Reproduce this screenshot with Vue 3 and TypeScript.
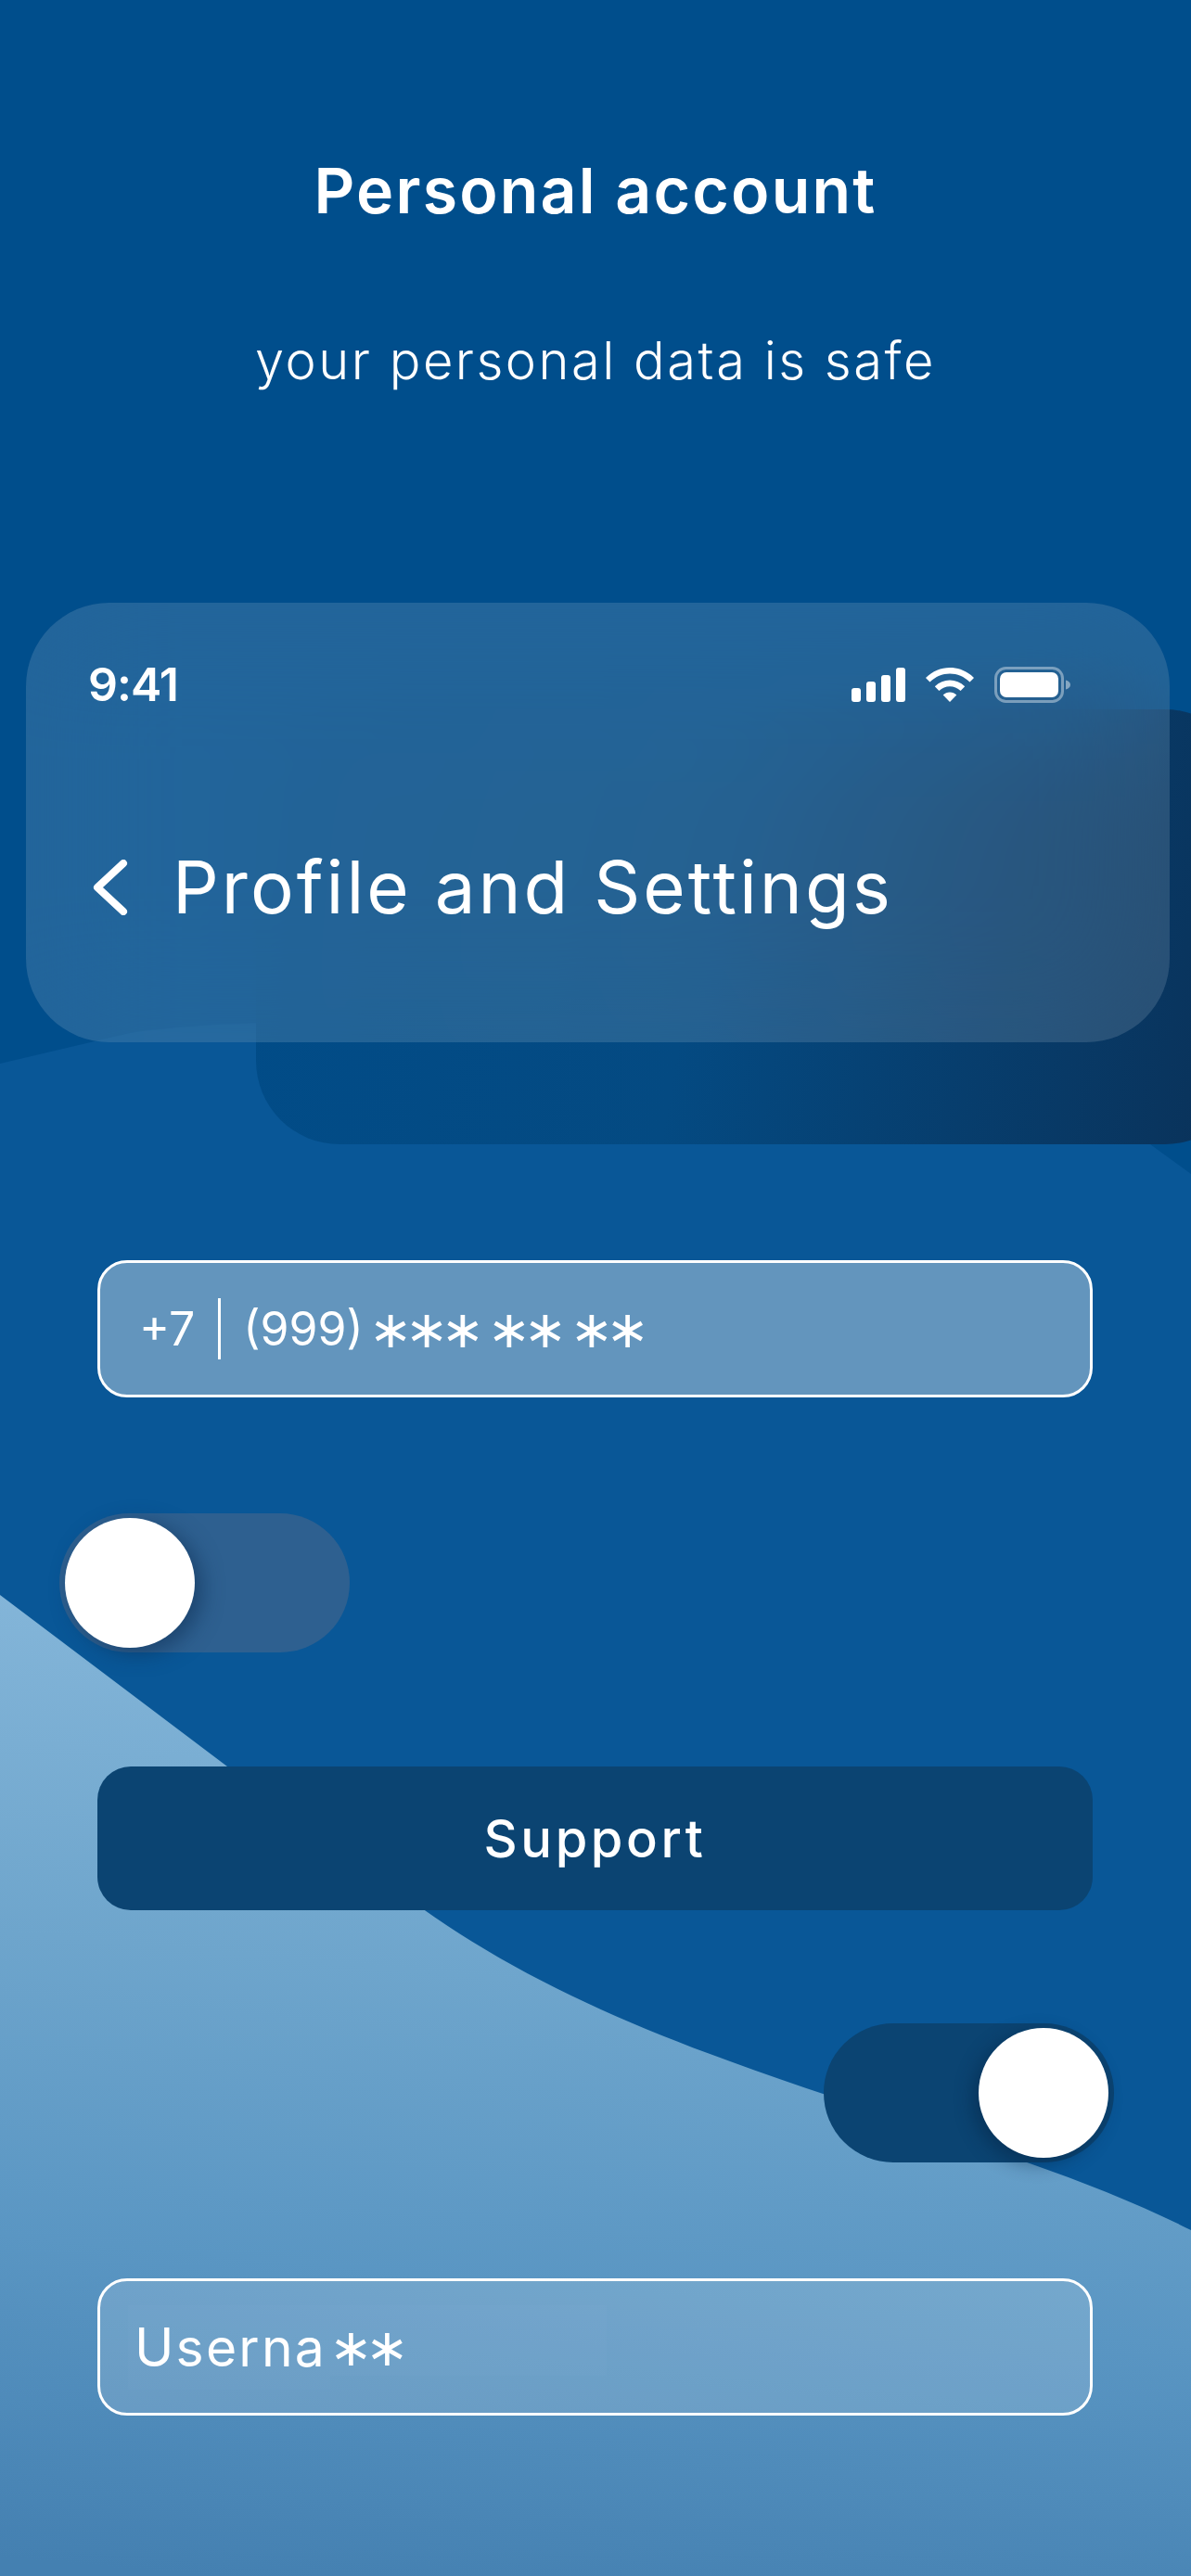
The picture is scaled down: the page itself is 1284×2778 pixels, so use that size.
<template>
  <div class="screen">
    <svg class="bg" viewBox="0 0 1284 2778" width="1284" height="2778" aria-hidden="true">
      <defs>
        <linearGradient id="lightWave" gradientUnits="userSpaceOnUse" x1="320" y1="1700" x2="220" y2="2778">
          <stop offset="0" stop-color="#86b7da" />
          <stop offset="0.38" stop-color="#6ea5cc" />
          <stop offset="0.68" stop-color="#5a96c3" />
          <stop offset="1" stop-color="#4480b1" />
        </linearGradient>
      </defs>
      <rect width="1284" height="2778" fill="#004e8c" />
      <path d="M0 1147 L140 1114 C300 1090 800 1090 1240 1234 L1284 1266 V2778 H0 Z" fill="#095797" />
      <path
        d="M0 1720 L245 1905 L455 2058 C640 2190 860 2246 1110 2333 C1170 2354 1230 2378 1284 2405 V2778 H0 Z"
        fill="url(#lightWave)"
      />
    </svg>
    <div class="card-shadow"></div>

    <header class="intro">
      <h1 class="intro-title">Personal account</h1>
      <p class="intro-sub">your personal data is safe</p>
    </header>

    <section class="card">
      <div class="status">
        <span class="status-time">9:41</span>
        <div class="status-icons">
          <svg width="58" height="37" viewBox="0 0 58 37" fill="#fff">
            <rect x="0" y="22" width="10" height="15" rx="3" />
            <rect x="16" y="15" width="10" height="22" rx="3" />
            <rect x="32" y="8" width="10" height="29" rx="3" />
            <rect x="48" y="0" width="10" height="37" rx="3" />
          </svg>
          <svg width="52" height="37" viewBox="0 0 52 37" fill="#fff">
            <path d="M26 0C35.5 0 44.5 3.6 52 11L47.5 15.6C41.5 9.8 34 6.6 26 6.6C18 6.6 10.5 9.8 4.500 15.600L0 11C7.500 3.600 16.500 0 26 0Z" />
            <path d="M26 13.500C32 13.500 37.500 15.800 42.200 20.300L37.600 25C34.300 21.900 30.300 20.200 26 20.200C21.700 20.200 17.700 21.900 14.400 25L9.800 20.300C14.500 15.800 20 13.500 26 13.500Z" />
            <path d="M26 26.500C28.800 26.500 31.300 27.500 33.300 29.400L26 37L18.700 29.400C20.700 27.500 23.200 26.500 26 26.500Z" />
          </svg>
          <svg width="82" height="39" viewBox="0 0 82 39">
            <rect x="1.500" y="1.500" width="72" height="36" rx="11" fill="none" stroke="#fff" stroke-opacity="0.4" stroke-width="3" />
            <rect x="6" y="6" width="63" height="27" rx="7" fill="#fff" />
            <path d="M77 14.500C80 15.500 82 17 82 19.500C82 22 80 23.500 77 24.500Z" fill="#fff" fill-opacity="0.45" />
          </svg>
        </div>
      </div>
      <div class="card-head">
        <svg class="back" width="38" height="60" viewBox="0 0 38 60" fill="none">
          <path d="M33 4L5 30L33 56" stroke="#fff" stroke-width="8" stroke-linecap="round" stroke-linejoin="round" />
        </svg>
        <h2 class="card-title">Profile and Settings</h2>
      </div>
    </section>

    <main class="form">
      <div class="field field-phone">
        <span class="code">+7</span>
        <span class="divider"></span>
        <span class="number">(999)</span>
        <span class="stars stars-first">∗∗∗</span>
        <span class="stars">∗∗</span>
        <span class="stars">∗∗</span>
      </div>

      <div class="toggle toggle-off">
        <span class="knob"></span>
      </div>

      <button type="button" class="support">Support</button>

      <div class="toggle toggle-on">
        <span class="knob"></span>
      </div>

      <div class="field field-user">
        <span class="patch patch-a"></span>
        <span class="patch patch-b"></span>
        <span class="username">Userna</span>
        <span class="stars">∗∗</span>
      </div>
    </main>
  </div>
</template>

<script setup lang="ts">
</script>

<style>
html,
body {
  margin: 0;
  background: #004e8c;
}
</style>

<style scoped>
.screen {
  position: relative;
  width: 1284px;
  height: 2778px;
  overflow: hidden;
  color: #fff;
  font-family: Inter, "Noto Sans", sans-serif;
}

.bg {
  position: absolute;
  inset: 0;
}

.card-shadow {
  position: absolute;
  left: 276px;
  top: 765px;
  width: 1070px;
  height: 469px;
  border-radius: 90px;
  background: linear-gradient(100deg, #014c88 0%, #044a82 45%, #0a3158 100%);
}

.intro {
  position: relative;
  padding-top: 165px;
  text-align: center;
}

.intro-title {
  margin: 0;
  font-size: 68px;
  line-height: 80px;
  font-weight: 600;
  letter-spacing: 2.200px;
}

.intro-sub {
  margin: 114px 0 0;
  font-size: 56px;
  line-height: 60px;
  font-weight: 300;
  letter-spacing: 2.500px;
}

.card {
  position: relative;
  box-sizing: border-box;
  width: 1233px;
  height: 474px;
  margin: 231px 0 0 28px;
  padding: 69px 46px 0 67px;
  border-radius: 90px;
  background: rgba(255, 255, 255, 0.135);
  backdrop-filter: blur(70px);
}

.status {
  display: flex;
  align-items: center;
  justify-content: space-between;
  height: 39px;
}

.status-time {
  font-size: 50px;
  line-height: 39px;
  font-weight: 600;
  letter-spacing: -1px;
}

.status-icons {
  display: flex;
  align-items: center;
  gap: 22px;
  margin-right: 61px;
}

.card-head {
  display: flex;
  align-items: center;
  gap: 48px;
  margin-top: 169px;
  padding-left: 5px;
}

.back {
  flex: none;
}

.card-title {
  margin: 0;
  font-size: 78px;
  line-height: 60px;
  font-weight: 400;
  letter-spacing: 3px;
}

.form {
  position: relative;
  display: flex;
  flex-direction: column;
  padding: 235px 106px 0 105px;
}

.field {
  position: relative;
  box-sizing: border-box;
  display: flex;
  align-items: center;
  height: 148px;
  border: 3px solid #fff;
  border-radius: 32px;
}

.field-phone {
  padding-left: 42px;
  background: rgba(255, 255, 255, 0.37);
  font-size: 50px;
  font-weight: 400;
}

.divider {
  width: 3px;
  height: 66px;
  margin: 0 24px 0 25px;
  background: #fff;
}

.stars {
  position: relative;
  font-family: "DejaVu Sans", sans-serif;
  font-size: 56px;
  font-weight: 400;
  letter-spacing: -8px;
  margin-left: 11px;
}

.stars-first {
  margin-left: 6px;
}

.toggle {
  position: relative;
  box-sizing: border-box;
  display: flex;
  align-items: center;
  width: 313px;
  height: 150px;
  padding: 0 6px;
  border-radius: 75px;
}

.toggle-off {
  margin: 125px 0 0 -41px;
  background: #2e6090;
}

.toggle-on {
  align-self: flex-end;
  justify-content: flex-end;
  margin: 122px -23px 0 0;
  background: #0b4472;
}

.knob {
  width: 140px;
  height: 140px;
  border-radius: 50%;
  background: #fff;
}

.toggle-off .knob {
  box-shadow: 8px 6px 22px rgba(10, 40, 75, 0.5);
}

.toggle-on .knob {
  box-shadow: -6px 6px 20px rgba(5, 30, 60, 0.45);
}

.support {
  height: 155px;
  margin-top: 123px;
  padding: 0;
  border: none;
  border-radius: 36px;
  background: #0b4472;
  color: #fff;
  font-family: inherit;
  font-size: 56px;
  font-weight: 500;
  letter-spacing: 3.600px;
}

.field-user {
  margin-top: 125px;
  padding-left: 37px;
  background: rgba(255, 255, 255, 0.145);
  font-size: 57px;
  font-weight: 400;
}

.username {
  position: relative;
  letter-spacing: 2.200px;
}

.field-user .stars {
  margin-left: 3px;
}

.patch {
  position: absolute;
  background: rgba(255, 255, 255, 0.02);
}

.patch-a {
  left: 30px;
  top: 26px;
  width: 218px;
  height: 91px;
}

.patch-b {
  left: 248px;
  top: 26px;
  width: 298px;
  height: 76px;
}
</style>
